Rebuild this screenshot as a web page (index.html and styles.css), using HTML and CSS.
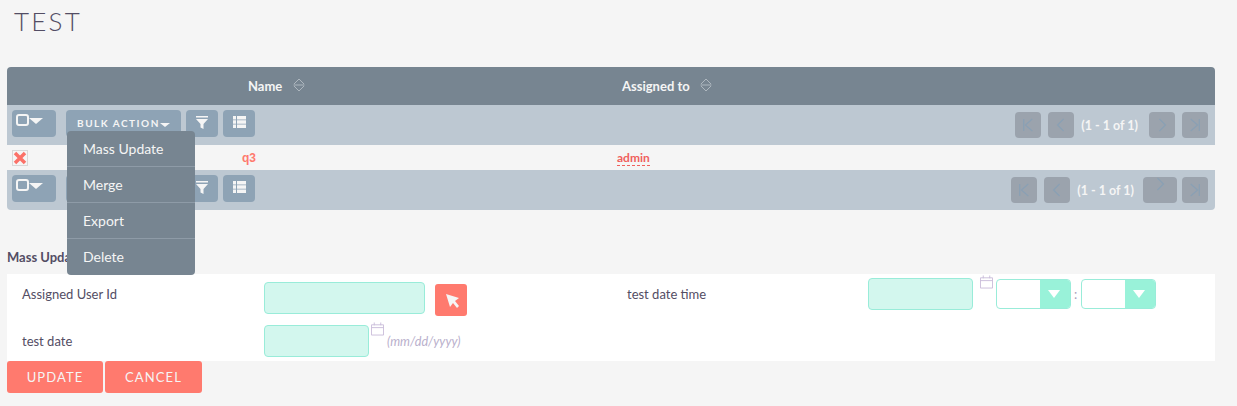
FILE: index.html
```html
<!DOCTYPE html>
<html lang="en">
<head>
<meta charset="utf-8">
<title>TEST</title>
<link rel="stylesheet" href="styles.css">
</head>
<body>
<h1 class="title">TEST</h1>
<section class="list">
  <div class="list-head">
    <div class="col-name"><span>Name</span><svg class="sort" viewBox="0 0 12 14"><path d="M1 6 6 1l5 5M1 8l5 5 5-5M0.500 7h11"/></svg></div>
    <div class="col-assigned"><span>Assigned to</span><svg class="sort" viewBox="0 0 12 14"><path d="M1 6 6 1l5 5M1 8l5 5 5-5M0.500 7h11"/></svg></div>
  </div>
  <div class="bar">
    <button class="btn btn-check"><i class="box"></i><i class="caret"></i></button>
    <div class="bulk-wrap">
      <button class="btn btn-bulk">BULK ACTION<i class="caret caret-sm"></i></button>
      <ul class="menu">
        <li>Mass Update</li>
        <li>Merge</li>
        <li>Export</li>
        <li>Delete</li>
      </ul>
    </div>
    <button class="btn btn-icon"><svg width="12" height="13" viewBox="0 0 12 13"><path d="M0 0h12v1.500H0zM0 3h12L7.500 8v5L4.500 11.500V8z"/></svg></button>
    <button class="btn btn-icon"><svg width="13" height="12" viewBox="0 0 13 12"><path d="M0 0h3v3.500H0zM4 0h9v3.500H4zM0 4.250h3v3.500H0zM4 4.250h9v3.500H4zM0 8.500h3V12H0zM4 8.500h9V12H4z"/></svg></button>
    <div class="pager">
      <button class="pg"><svg viewBox="0 0 14 16"><path d="M2 1v14M12 1 4 8l8 7"/></svg></button>
      <button class="pg"><svg viewBox="0 0 14 16"><path d="M10 1 3 8l7 7"/></svg></button>
      <span class="count">(1 - 1 of 1)</span>
      <button class="pg"><svg viewBox="0 0 14 16"><path d="M4 1l7 7-7 7"/></svg></button>
      <button class="pg"><svg viewBox="0 0 14 16"><path d="M12 1v14M2 1l8 7-8 7"/></svg></button>
    </div>
  </div>
  <div class="row">
    <svg class="del" viewBox="0 0 16 16"><rect x="0.500" y="0.500" width="15" height="15"/><path d="M3 3l10 10M13 3 3 13"/></svg>
    <span class="cell-name">q3</span>
    <span class="cell-assigned">admin</span>
  </div>
  <div class="bar bar-bottom">
    <button class="btn btn-check"><i class="box"></i><i class="caret"></i></button>
    <button class="btn btn-bulk">BULK ACTION<i class="caret caret-sm"></i></button>
    <button class="btn btn-icon"><svg width="12" height="13" viewBox="0 0 12 13"><path d="M0 0h12v1.500H0zM0 3h12L7.500 8v5L4.500 11.500V8z"/></svg></button>
    <button class="btn btn-icon"><svg width="13" height="12" viewBox="0 0 13 12"><path d="M0 0h3v3.500H0zM4 0h9v3.500H4zM0 4.250h3v3.500H0zM4 4.250h9v3.500H4zM0 8.500h3V12H0zM4 8.500h9V12H4z"/></svg></button>
    <div class="pager pager-bottom">
      <button class="pg"><svg viewBox="0 0 14 16"><path d="M2 1v14M12 1 4 8l8 7"/></svg></button>
      <button class="pg"><svg viewBox="0 0 14 16"><path d="M10 1 3 8l7 7"/></svg></button>
      <span class="count">(1 - 1 of 1)</span>
      <button class="pg pg-wide"><svg viewBox="0 0 14 16"><path d="M4 1l7 7-7 7"/></svg></button>
      <button class="pg"><svg viewBox="0 0 14 16"><path d="M12 1v14M2 1l8 7-8 7"/></svg></button>
    </div>
  </div>
</section>
<h2 class="mass-title">Mass Update</h2>
<form class="mass-form">
  <div class="cell label">Assigned User Id</div>
  <div class="cell fields">
    <input class="input input-wide" type="text">
    <button type="button" class="select-btn"><svg width="16" height="16" viewBox="0 0 16 16"><path d="M2 1l13 4-4 3 4 5-2 2-4-5-3 4z"/></svg></button>
  </div>
  <div class="cell label label-right">test date time</div>
  <div class="cell fields fields-time">
    <input class="input input-date" type="text">
    <svg class="cal" viewBox="0 0 14 14"><path d="M.5 2.500h13v11H.5zM.5 5.500h13M3.500 0v3M10.500 0v3"/></svg>
    <div class="time"><i class="arrow"></i></div>
    <span class="colon">:</span>
    <div class="time"><i class="arrow"></i></div>
  </div>
  <div class="cell label label-date">test date</div>
  <div class="cell fields fields-date">
    <input class="input input-date" type="text">
    <svg class="cal" viewBox="0 0 14 14"><path d="M.5 2.500h13v11H.5zM.5 5.500h13M3.500 0v3M10.500 0v3"/></svg>
    <em class="hint">(mm/dd/yyyy)</em>
  </div>
  <div class="cell"></div>
  <div class="cell"></div>
</form>
<div class="actions">
  <button class="action">UPDATE</button>
  <button class="action action-cancel">CANCEL</button>
</div>
</body>
</html>
```
FILE: styles.css
```css
* { box-sizing: border-box; }
html, body { margin: 0; height: 406px; overflow: hidden; }
body {
  background: #f5f5f5;
  padding: 0 22px 0 7px;
  font-family: Lato, sans-serif;
  color: #534d64;
}
button { font-family: inherit; border: 0; padding: 0; margin: 0; }
.title {
  margin: 0 0 0 7px;
  height: 67px;
  padding-top: 4px;
  font-size: 26px;
  line-height: 34px;
  font-weight: 300;
  letter-spacing: 2.2px;
  color: #534d64;
}
.list-head {
  height: 38px;
  background: #778591;
  border-radius: 4px 4px 0 0;
  display: grid;
  grid-template-columns: 615px 1fr;
  color: #f5f5f5;
  font-weight: 700;
  font-size: 13px;
}
.col-name, .col-assigned {
  display: flex;
  align-items: center;
  gap: 11px;
  height: 38px;
  padding-bottom: 1px;
}
.col-assigned { gap: 10px; }
.col-name { padding-left: 241px; }
.sort { width: 12px; height: 14px; fill: none; stroke: #aeb7bf; stroke-width: 1; margin-top: -1px; }
.bar {
  height: 40px;
  background: #bdc8d2;
  display: flex;
  align-items: flex-start;
  padding: 5px 7px 0 5px;
  gap: 5px;
}
.bar-bottom { border-radius: 0 0 4px 4px; }
.btn {
  height: 27px;
  background: #8ea3b5;
  border-radius: 4px;
  color: #f5f5f5;
  display: flex;
  align-items: center;
  justify-content: center;
}
.btn svg { fill: #f5f5f5; }
.btn-check { width: 44px; margin-right: 5px; justify-content: flex-start; padding: 0 0 7px 4px; }
.box { display: block; width: 13px; height: 12px; border: 2px solid #f5f5f5; border-radius: 3px; }
.caret {
  display: block;
  width: 0; height: 0;
  border-left: 7px solid transparent;
  border-right: 7px solid transparent;
  border-top: 6px solid #f5f5f5;
  margin-top: 2px;
}
.caret-sm { border-left-width: 5.500px; border-right-width: 5.500px; border-top-width: 4px; margin-top: 4px; }
.btn-bulk {
  width: 115px;
  font-size: 10px;
  font-weight: 700;
  letter-spacing: 1.500px;
  padding-bottom: 1px;
}
.btn-icon { width: 32px; padding-bottom: 3px; }
.bulk-wrap { position: relative; width: 115px; height: 27px; }
.menu {
  position: absolute;
  z-index: 5;
  left: 1px;
  top: 21px;
  width: 128px;
  margin: 0;
  padding: 0;
  list-style: none;
  background: #778591;
  border-radius: 4px;
  color: #f5f5f5;
  font-size: 14px;
}
.menu li {
  height: 36px;
  line-height: 35px;
  padding-left: 16px;
  border-bottom: 1px solid #8e9ba7;
}
.menu li:last-child { border-bottom: 0; }
.pager { margin-left: auto; display: flex; align-items: center; gap: 7px; height: 26px; margin-top: 2px; color: #f5f5f5; font-size: 12.500px; font-weight: 700; }
.pg { width: 26px; height: 26px; border-radius: 4px; background: #9ba3ad; display: flex; align-items: center; justify-content: center; }
.pg svg { width: 12px; height: 14px; fill: none; stroke: #8aa0b4; stroke-width: 1.500; }
.pg-wide { width: 34px; align-items: flex-start; padding-top: 0; }
.count { margin-right: 4px; white-space: nowrap; }
.pager-bottom .count { margin-right: 2px; }
.pager-bottom .pg-wide { margin-right: -2px; }
.row {
  height: 25px;
  display: grid;
  grid-template-columns: 235px 375px 1fr;
  align-items: center;
  font-size: 12px;
  font-weight: 700;
}
.del { width: 16px; height: 16px; margin-left: 5px; display: block; fill: #f5f5f5; stroke: #d8d8d8; }
.del path { stroke: #fb7168; stroke-width: 3.500; }
.cell-name { color: #ff7a6e; font-family: "Liberation Sans", sans-serif; }
.cell-assigned { color: #f0605c; border-bottom: 1px dashed #f0605c; justify-self: start; line-height: 14px; margin-top: 2px; }
.mass-title {
  margin: 0;
  height: 64px;
  padding-top: 39px;
  font-size: 13px;
  line-height: 17px;
  font-weight: 700;
  color: #534d64;
}
.mass-form {
  background: #fff;
  display: grid;
  grid-template-columns: 257px 362px 241px 1fr;
  grid-template-rows: 43px 44px;
  height: 87px;
}
.cell { display: flex; align-items: flex-start; }
.label { padding: 12px 0 0 15px; font-size: 13px; line-height: 17px; color: #534d64; }
.label-date { padding-top: 16px; }
.label-right { padding-left: 1px; }
.input { background: #d3f7ee; border: 1px solid #99ecd9; border-radius: 4px; height: 32px; margin: 8px 0 0; padding: 0; flex: none; }
.input-wide { width: 161px; }
.input-date { width: 105px; }
.fields-date .input { margin-top: 8px; }
.fields-time { padding-left: 1px; }
.fields-time .input { margin-top: 4px; }
.select-btn { width: 32px; height: 32px; background: #ff7a6e; border-radius: 3px; margin: 10px 0 0 10px; display: flex; align-items: center; justify-content: center; }
.select-btn svg { fill: #f5f5f5; margin: 2px 0 0 2px; }
.cal { width: 13px; height: 14px; fill: none; stroke: #c9bcd9; stroke-width: 1; margin: 1px 0 0 2px; flex: none; }
.fields-time .cal { margin-left: 7px; }
.fields-date .cal { margin-top: 5px; }
.time { width: 75px; height: 30px; margin: 5px 0 0 3px; border: 1px solid #99ecd9; border-radius: 4px; background: #fff; position: relative; overflow: hidden; flex: none; }
.colon + .time { margin-left: 1px; }
.arrow { position: absolute; right: 0; top: 0; bottom: 0; width: 30px; background: #99f2d9; }
.arrow::after { content: ""; position: absolute; left: 8px; top: 10px; border-left: 6.500px solid transparent; border-right: 6.500px solid transparent; border-top: 8px solid #fff; }
.colon { margin: 12px 3px 0 3px; font-size: 13px; color: #a99fbb; line-height: 17px; }
.hint { margin: 16px 0 0 3px; font-size: 12.600px; line-height: 17px; color: #b9afcc; font-style: italic; }
.actions { display: flex; gap: 2px; }
.action { width: 96px; height: 32px; background: #ff7a6e; border-radius: 3px; color: #f5f5f5; font-size: 13px; letter-spacing: 1.100px; padding-bottom: 1px; }
.action-cancel { width: 97px; }
```
